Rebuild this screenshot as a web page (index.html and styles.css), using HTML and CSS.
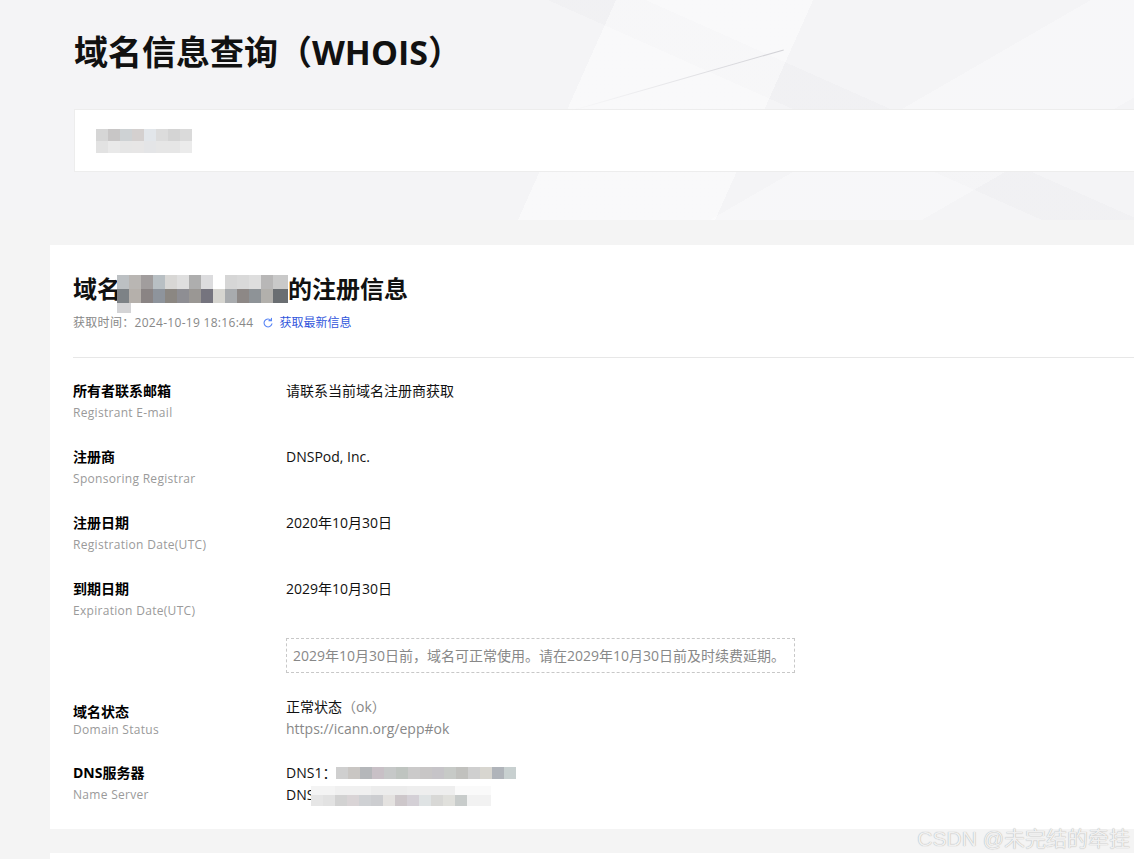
FILE: index.html
```html
<!DOCTYPE html>
<html lang="zh-CN">
<head>
    <meta charset="utf-8" />
    <title>域名信息查询（WHOIS）</title>
    <link rel="stylesheet" href="styles.css">
</head>
<body>
    <div class="hero">
        <h1 class="hero-title">域名信息查询（WHOIS）</h1>
        <div class="search-box">
            <span class="mosaic mosaic-search"></span>
        </div>
    </div>
    <div class="main">
        <div class="card">
            <div class="card-head">
                <h2 class="card-title">域名<span class="mosaic mosaic-domain"></span>的注册信息</h2>
                <p class="card-meta">
                    获取时间：2024-10-19 18:16:44
                    <a class="refresh" href="#">
                        <svg viewBox="0 0 16 16" width="12" height="12">
                            <path d="M13.2 9.2A5.3 5.3 0 1 1 12 4.4" fill="none" stroke="currentColor" stroke-width="1.5" stroke-linecap="round"/>
                            <path d="M12.6 1.6v3.3H9.3" fill="none" stroke="currentColor" stroke-width="1.5" stroke-linecap="round" stroke-linejoin="round"/>
                        </svg>
                        <span>获取最新信息</span>
                    </a>
                </p>
            </div>
            <div class="info-list">
                <div class="info-row">
                    <div class="info-label">
                        <b>所有者联系邮箱</b>
                        <span>Registrant E-mail</span>
                    </div>
                    <div class="info-value">请联系当前域名注册商获取</div>
                </div>
                <div class="info-row">
                    <div class="info-label">
                        <b>注册商</b>
                        <span>Sponsoring Registrar</span>
                    </div>
                    <div class="info-value">DNSPod, Inc.</div>
                </div>
                <div class="info-row">
                    <div class="info-label">
                        <b>注册日期</b>
                        <span>Registration Date(UTC)</span>
                    </div>
                    <div class="info-value">2020年10月30日</div>
                </div>
                <div class="info-row">
                    <div class="info-label">
                        <b>到期日期</b>
                        <span>Expiration Date(UTC)</span>
                    </div>
                    <div class="info-value">2029年10月30日</div>
                </div>
                <div class="info-row notice-row">
                    <div class="info-label"></div>
                    <div class="info-value">
                        <div class="notice">2029年10月30日前，域名可正常使用。请在2029年10月30日前及时续费延期。</div>
                    </div>
                </div>
                <div class="info-row status-row">
                    <div class="info-label">
                        <b>域名状态</b>
                        <span>Domain Status</span>
                    </div>
                    <div class="info-value">
                        <div>正常状态<span class="muted">（ok）</span></div>
                        <div class="muted">https://icann.org/epp#ok</div>
                    </div>
                </div>
                <div class="info-row">
                    <div class="info-label">
                        <b>DNS服务器</b>
                        <span>Name Server</span>
                    </div>
                    <div class="info-value">
                        <div>DNS1：<span class="mosaic mosaic-ns1"></span></div>
                        <div>DNS<span class="mosaic mosaic-ns2"></span></div>
                    </div>
                </div>
            </div>
        </div>
        <div class="card card-next"></div>
    </div>
    <div class="watermark">CSDN @未完结的牵挂</div>
</body>
</html>
```

FILE: styles.css
```css
html, body {
    margin: 0;
    padding: 0;
}
body {
    position: relative;
    height: 859px;
    overflow: hidden;
    background-color: #f4f4f4;
    font-family: "Open Sans", "Noto Sans CJK SC", sans-serif;
    color: #000;
}
.hero {
    position: relative;
    overflow: hidden;
    height: 220px;
    box-sizing: border-box;
    padding: 28px 0 0 74px;
    background-color: #f4f4f6;
    background-image:
        linear-gradient(114deg, transparent 0 50%, rgba(255, 255, 255, 0.45) 50% 66%, transparent 66%),
        linear-gradient(150deg, transparent 0 72%, rgba(255, 255, 255, 0.3) 72% 86%, transparent 86%),
        linear-gradient(24deg, transparent 0 64%, rgba(235, 235, 238, 0.35) 64% 70%, transparent 70%);
}
.hero::before {
    content: "";
    position: absolute;
    left: 566px;
    top: 80px;
    width: 222px;
    height: 1px;
    background: linear-gradient(90deg, rgba(205, 205, 210, 0), rgba(205, 205, 210, 0.9));
    transform: rotate(-16deg);
}
.hero-title {
    margin: 0;
    font-size: 34px;
    line-height: 48px;
    font-weight: 700;
    color: #111;
}
.search-box {
    margin-top: 33px;
    height: 63px;
    box-sizing: border-box;
    margin-right: -4px;
    background: #fff;
    border: 1px solid #ededed;
    display: flex;
    align-items: center;
    padding-left: 21px;
}
.mosaic {
    display: inline-block;
    background-repeat: no-repeat;
}
.mosaic-search {
    width: 96px;
    height: 24px;
    background-image:
        linear-gradient(90deg, #d6d6d6 0 12px, #c8c6c6 12px 24px, #ced2d4 24px 36px, #d4d0cf 36px 48px, #e2e6ea 48px 60px, #dcdcdc 60px 72px, #d4d4d4 72px 84px, #dadada 84px 96px),
        linear-gradient(90deg, #e2e2e2 0 12px, #e9e9e9 12px 24px, #e6e6e6 24px 36px, #e7e6e6 36px 48px, #e4e5e7 48px 60px, #e6e6e6 60px 72px, #e6e6e6 72px 84px, #ebebeb 84px 96px);
    background-size: 96px 12px, 96px 12px;
    background-position: 0 0, 0 12px;
}
.main {
    padding: 25px 0 0 50px;
}
.card {
    background: #fff;
    padding: 28px 0 23px 23px;
}
.card-next {
    margin-top: 24px;
    height: 40px;
    padding: 0;
}
.card-head {
    border-bottom: 1px solid #e7e7e7;
    padding-bottom: 24px;
}
.card-title {
    margin: 0;
    font-size: 24px;
    line-height: 32px;
    font-weight: 700;
    color: #111;
}
.mosaic-domain {
    position: relative;
    vertical-align: top;
    margin: 2px 0 0 -4px;
    width: 171px;
    height: 28px;
    background-image:
        linear-gradient(90deg, #bcc0c3 0 12px, #b9b6b3 12px 24px, #a19d9d 24px 36px, #b8bfc3 36px 48px, #d8d7d5 48px 60px, #dfdfdf 60px 72px, #aeaeae 72px 84px, #dcdcde 84px 96px, #ffffff 96px 108px, #d6d6d6 108px 120px, #d9d9d9 120px 132px, #dedede 132px 144px, #b8b7b7 144px 156px, #c9c9c9 156px 171px),
        linear-gradient(90deg, #7d8286 0 12px, #b5b0ab 12px 24px, #8a8484 24px 36px, #8e949c 36px 48px, #8b8782 48px 60px, #8e8e93 60px 72px, #9a9794 72px 84px, #75747e 84px 96px, #d6d5d0 96px 108px, #a8abae 108px 120px, #8d8886 120px 132px, #8e9397 132px 144px, #b2b0ac 144px 156px, #6a6e72 156px 171px);
    background-size: 171px 14px, 171px 14px;
    background-position: 0 0, 0 14px;
}
.mosaic-domain::after {
    content: "";
    position: absolute;
    left: 0;
    top: 28px;
    width: 14px;
    height: 10px;
    background: #d4d4d6;
}
.card-meta {
    margin: 8px 0 0 0;
    font-size: 12px;
    line-height: 20px;
    letter-spacing: 0.3px;
    color: #888;
    display: flex;
    align-items: center;
}
.refresh {
    display: inline-flex;
    align-items: center;
    margin-left: 9px;
    color: #3156dc;
    text-decoration: none;
    letter-spacing: 0;
}
.refresh svg {
    color: #5a86f5;
    margin-right: 5px;
}
.info-list {
    padding-top: 22px;
}
.info-row {
    display: grid;
    grid-template-columns: 213px 1fr;
    margin-bottom: 22px;
    font-size: 14px;
    line-height: 22px;
}
.info-row:last-child {
    margin-bottom: 0;
}
.info-label b {
    display: block;
    font-weight: 700;
    color: #000;
}
.info-label span {
    display: block;
    font-size: 12px;
    letter-spacing: 0.3px;
    color: #9a9a9a;
}
.info-value {
    color: #111;
}
.muted {
    color: #888;
}
.notice-row {
    margin-top: -6px;
    margin-bottom: 23px;
}
.notice {
    width: 509px;
    height: 35px;
    box-sizing: border-box;
    border: 1px dashed #c8c8c8;
    padding: 0 6px;
    line-height: 33px;
    color: #888;
    white-space: nowrap;
}
.status-row .info-label {
    padding-top: 5px;
}
.status-row .info-label span {
    line-height: 14px;
}
.mosaic-ns1 {
    vertical-align: -1px;
    width: 180px;
    height: 12px;
    background-image: linear-gradient(90deg, #cfcfcf 0 12px, #c9c6c3 12px 24px, #b5b7ba 24px 36px, #c8c0c6 36px 48px, #c6c8c8 48px 60px, #bfc4c0 60px 72px, #cbcaca 72px 84px, #c8c6c6 84px 96px, #c6c4c8 96px 108px, #c7cac7 108px 120px, #c1c1be 120px 132px, #cfcfcf 132px 144px, #d8d6d0 144px 156px, #b0b4ba 156px 168px, #c8d0d0 168px 180px);
}
.mosaic-ns2 {
    vertical-align: -6px;
    margin-left: -3px;
    width: 180px;
    height: 20px;
    background-image:
        linear-gradient(90deg, #f4f4f4 0 24px, #f0f0f0 24px 60px, #ececec 60px 96px, #eeeeee 96px 144px, #fafafa 144px 180px),
        linear-gradient(90deg, #e6e6e6 0 12px, #e2e2e2 12px 24px, #d2d2d2 24px 36px, #d9d4d6 36px 48px, #cfd1d4 48px 60px, #cccdd0 60px 72px, #e4e2e0 72px 84px, #cdc7ca 84px 96px, #d4d0d6 96px 108px, #dfe3e4 108px 120px, #d8d8d6 120px 132px, #e0e0dc 132px 144px, #c8cccb 144px 156px, #f2f2f2 156px 180px);
    background-size: 180px 9px, 180px 11px;
    background-position: 0 0, 0 9px;
}
.watermark {
    position: absolute;
    right: 4px;
    bottom: 7px;
    font-family: "Liberation Sans", "Noto Sans CJK SC", sans-serif;
    font-size: 21px;
    font-weight: 400;
    line-height: 26px;
    color: #f0f0f0;
    text-shadow: 0 0 1px #9c9c9c;
}
```
